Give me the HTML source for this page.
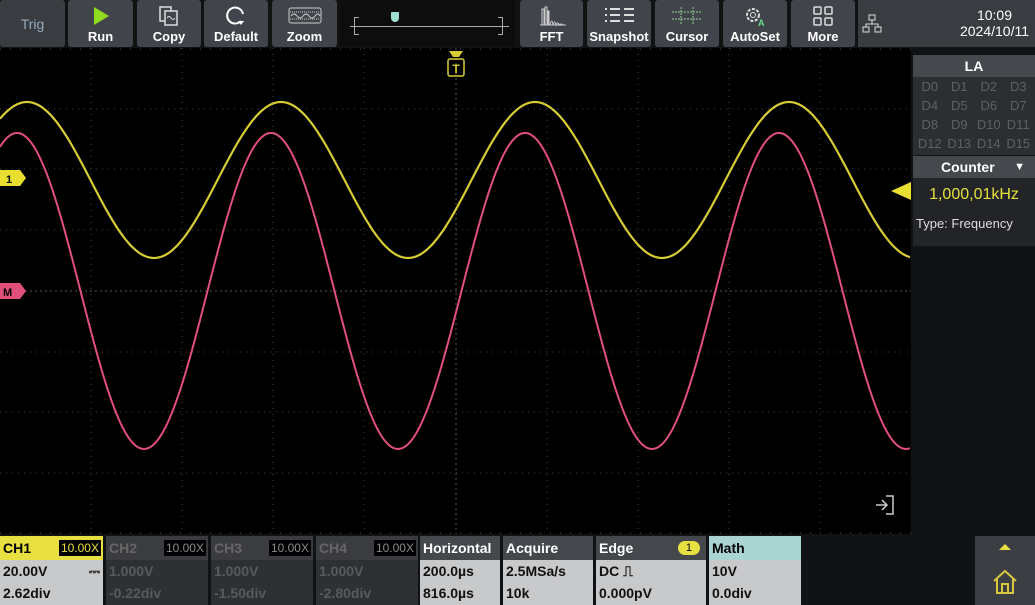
<!DOCTYPE html><html><head><style>
body{margin:0;width:1035px;height:605px;background:#111214;position:relative;overflow:hidden;font-family:"Liberation Sans",sans-serif;}
.b{position:absolute;top:0;height:47px;background:#41454b;border-radius:3px;color:#fff;font-weight:bold;font-size:13px;text-align:center;}
.b span{position:absolute;bottom:3px;left:0;right:0}
.b svg{position:absolute;top:5px;left:50%;transform:translateX(-50%)}
.ch{position:absolute;top:536px;height:69px;font-weight:bold;font-size:14px}
.ch .h{height:24px;line-height:24px;padding-left:3px;color:#fff;background:#44484d}
.ch .v{background:#c8c9cb;color:#111;height:45px;padding-left:3px;line-height:22px}
.off .h{background:#3a3c40;color:#666}.off .v{background:#2e3033;color:#575a5e}
.tag{position:absolute;right:2px;top:4px;background:#000;color:#8a8a8a;font-size:12px;line-height:16px;padding:0 2px;font-weight:normal}
</style></head><body>
<div class="b" style="left:0;width:65px;background:#393c41"><span style="bottom:15px;color:#9ab;font-weight:normal;font-size:14px">Trig</span></div>
<div class="b" style="left:68px;width:65px"><svg width="20" height="22"><polygon points="3,2 18,11 3,20" fill="#8fdc20"/></svg><span>Run</span></div>
<div class="b" style="left:137px;width:64px"><svg width="24" height="22"><rect x="3" y="2" width="11" height="14" fill="none" stroke="#ddd" stroke-width="1.5"/><rect x="8" y="6" width="12" height="14" fill="#41454b" stroke="#ddd" stroke-width="1.5"/><path d="M10 13q2-3 4 0t4 0" stroke="#ddd" fill="none"/></svg><span>Copy</span></div>
<div class="b" style="left:204px;width:64px"><svg width="24" height="22"><path d="M17 16A8 8 0 1 1 19 9" fill="none" stroke="#fff" stroke-width="2"/><path d="M14 16h6l-3 4z" fill="#fff"/></svg><span>Default</span></div>
<div class="b" style="left:272px;width:65px"><svg width="36" height="22"><rect x="2" y="3" width="32" height="15" rx="2" fill="none" stroke="#ccc"/><path d="M3 7h30M3 14h30" stroke="#ccc" stroke-dasharray="1 1"/><path d="M4 11q3-4 6 0t6 0t6 0t6 0t5 0" stroke="#ccc" fill="none"/></svg><span>Zoom</span></div>
<div style="position:absolute;left:340px;top:0;width:175px;height:47px;background:#0d0d0e">
<div style="position:absolute;left:10px;right:6px;top:26px;height:1px;background:#aaa"></div>
<div style="position:absolute;left:14px;top:17px;width:4px;height:16px;border:1px solid #aaa;border-right:none"></div>
<div style="position:absolute;left:158px;top:17px;width:4px;height:16px;border:1px solid #aaa;border-left:none"></div>
<div style="position:absolute;left:51px;top:12px;width:8px;height:10px;background:#9de0d0;border-radius:1px 1px 4px 4px"></div></div>
<div class="b" style="left:520px;width:63px"><svg width="30" height="22"><path d="M3 20h26M5 20V4h2v16M8 20V2h2v18M11 20V6h1v14M13 20q2-8 3 0q2-6 3 0q2-4 3 0q2-2 4 0" stroke="#ccc" fill="none"/></svg><span>FFT</span></div>
<div class="b" style="left:587px;width:64px"><svg width="34" height="22"><path d="M3 4h2M3 10h2M3 16h2M8 4h10M8 10h10M8 16h10M22 4h10M22 10h10M22 16h10" stroke="#ddd" stroke-width="2"/></svg><span>Snapshot</span></div>
<div class="b" style="left:655px;width:64px"><svg width="34" height="22"><path d="M2 7h30M2 14h30M11 2v18M23 2v18" stroke="#9c9" stroke-dasharray="2 1"/></svg><span>Cursor</span></div>
<div class="b" style="left:723px;width:64px"><svg width="26" height="22"><circle cx="11" cy="10" r="6" fill="none" stroke="#ddd" stroke-width="2" stroke-dasharray="3 1.5"/><circle cx="11" cy="10" r="2.5" fill="none" stroke="#ddd"/><text x="16" y="21" fill="#6d8" font-size="9" font-weight="bold">A</text></svg><span>AutoSet</span></div>
<div class="b" style="left:791px;width:64px"><svg width="24" height="22"><rect x="3" y="2" width="7" height="7" rx="1" fill="none" stroke="#ddd" stroke-width="1.5"/><rect x="14" y="2" width="7" height="7" rx="1" fill="none" stroke="#ddd" stroke-width="1.5"/><rect x="3" y="13" width="7" height="7" rx="1" fill="none" stroke="#ddd" stroke-width="1.5"/><rect x="14" y="13" width="7" height="7" rx="1" fill="none" stroke="#ddd" stroke-width="1.5"/></svg><span>More</span></div>
<div style="position:absolute;left:858px;top:0;width:177px;height:47px;background:#393c41;color:#fff;font-size:14px">
<svg style="position:absolute;left:4px;top:14px" width="20" height="20"><rect x="7" y="1" width="6" height="5" fill="none" stroke="#ddd"/><rect x="1" y="13" width="6" height="5" fill="none" stroke="#ddd"/><rect x="13" y="13" width="6" height="5" fill="none" stroke="#ddd"/><path d="M10 6v4M4 13v-3h12v3" stroke="#ddd" fill="none"/></svg>
<div style="position:absolute;right:6px;top:7px;text-align:center;line-height:16px">10:09<br>2024/10/11</div></div>
<svg style="position:absolute;left:0;top:48px" width="911" height="486">
<rect width="911" height="486" fill="#000"/>
<g stroke="#444" stroke-dasharray="1 5">
<path d="M91 0v486M182 0v486M273 0v486M364 0v486M547 0v486M638 0v486M729 0v486M820 0v486"/>
<path d="M0 61h911M0 121h911M0 182h911M0 304h911M0 364h911M0 425h911"/></g>
<path d="M456 0v486M0 243h911" stroke="#555" stroke-dasharray="2 3"/>
<path d="M0 1h911M0 485h911" stroke="#555" stroke-dasharray="1 9"/>
<path id="y" fill="none" stroke="#d7cc35" stroke-width="2.2"/>
<path id="p" fill="none" stroke="#e0507a" stroke-width="2"/>
<path d="M449 3h14l-4 6h-6z" fill="#d7cc35"/><rect x="448" y="11" width="16" height="17" rx="2" fill="none" stroke="#d7cc35" stroke-width="1.5"/><text x="456" y="25" fill="#d7cc35" font-size="12" font-weight="bold" text-anchor="middle">T</text>
<path d="M0 122h20l6 8-6 8H0z" fill="#e8df30"/><text x="6" y="135" font-size="11" font-weight="bold">1</text>
<path d="M0 235h20l6 8-6 8H0z" fill="#e0507a"/><text x="3" y="248" font-size="11" font-weight="bold" fill="#000">M</text>
<path d="M891 143l20-9v18z" fill="#e8df30"/>
<path d="M876 457h10M882 452l5 5-5 5M886 448h7v18h-7" stroke="#ccc" stroke-width="1.5" fill="none"/>
</svg>
<script>
function mk(id,c,a,x0){var d="";for(var x=0;x<=911;x+=2){var y=c-a*Math.cos(2*Math.PI*(x-x0)/254);d+=(x?"L":"M")+x+" "+y.toFixed(1);}document.getElementById(id).setAttribute("d",d);}
mk("y",132,78,27);mk("p",243,158,17);
</script>
<div style="position:absolute;left:913px;top:55px;width:122px;height:100px;background:#2c2e31">
<div style="height:22px;line-height:22px;background:#45484d;color:#fff;font-weight:bold;text-align:center;font-size:14px">LA</div>
<div style="color:#5d6065;font-size:13px;line-height:19px;padding:0 2px;display:grid;grid-template-columns:repeat(4,1fr);text-align:center"><span>D0</span><span>D1</span><span>D2</span><span>D3</span><span>D4</span><span>D5</span><span>D6</span><span>D7</span><span>D8</span><span>D9</span><span>D10</span><span>D11</span><span>D12</span><span>D13</span><span>D14</span><span>D15</span></div></div>
<div style="position:absolute;left:913px;top:156px;width:122px;height:90px;background:#222427">
<div style="height:22px;line-height:22px;background:#45484d;color:#fff;font-weight:bold;font-size:14px;padding-left:28px">Counter <span style="position:absolute;right:10px;font-size:11px">▼</span></div>
<div style="color:#e6e03a;font-size:16px;text-align:center;margin-top:8px">1,000,01kHz</div>
<div style="color:#ddd;font-size:13px;margin:12px 0 0 3px">Type: Frequency</div></div>
<div class="ch" style="left:0;width:103px"><div class="h" style="background:#e8e040;color:#000">CH1<span class="tag" style="color:#e8e040">10.00X</span></div><div class="v">20.00V<span style="float:right;margin-right:3px">⎓</span><br>2.62div</div></div>
<div class="ch off" style="left:106px;width:102px"><div class="h">CH2<span class="tag">10.00X</span></div><div class="v">1.000V<br>-0.22div</div></div>
<div class="ch off" style="left:211px;width:102px"><div class="h">CH3<span class="tag">10.00X</span></div><div class="v">1.000V<br>-1.50div</div></div>
<div class="ch off" style="left:316px;width:102px"><div class="h">CH4<span class="tag">10.00X</span></div><div class="v">1.000V<br>-2.80div</div></div>
<div class="ch" style="left:420px;width:80px"><div class="h">Horizontal</div><div class="v">200.0µs<br>816.0µs</div></div>
<div class="ch" style="left:503px;width:90px"><div class="h">Acquire</div><div class="v">2.5MSa/s<br>10k</div></div>
<div class="ch" style="left:596px;width:110px"><div class="h">Edge<span style="position:absolute;right:6px;top:5px;background:#e8e040;color:#000;border-radius:8px;font-size:11px;line-height:14px;padding:0 8px;font-weight:normal">1</span></div><div class="v">DC ⎍<br>0.000pV</div></div>
<div class="ch" style="left:709px;width:92px"><div class="h" style="background:#a9d4d2;color:#000">Math</div><div class="v">10V<br>0.0div</div></div>
<div style="position:absolute;left:975px;top:536px;width:60px;height:69px;background:#3b3e43">
<div style="position:absolute;left:24px;top:8px;border:6px solid transparent;border-bottom:6px solid #e8e040;border-top:none;width:0"></div>
<svg style="position:absolute;left:16px;top:32px" width="28" height="28"><path d="M3 13L14 3l11 10M6 11v14h16V11M11 25v-9h6v9" stroke="#d8c840" stroke-width="2" fill="none"/></svg></div>
</body></html>
